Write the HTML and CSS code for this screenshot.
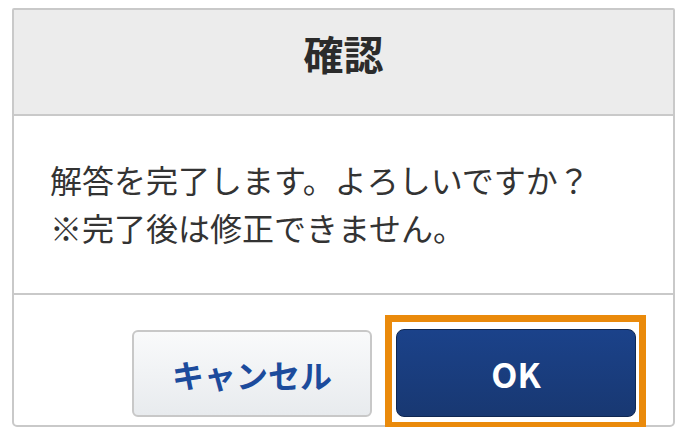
FILE: index.html
```html
<!DOCTYPE html>
<html lang="ja">
<head>
<meta charset="utf-8">
<title>確認</title>
<link rel="stylesheet" href="styles.css">
</head>
<body>
<div class="dialog">
  <div class="dialog-header">確認</div>
  <div class="dialog-body">
    <p>解答を完了します。よろしいですか？</p>
    <p>※完了後は修正できません。</p>
  </div>
  <div class="dialog-footer">
    <button class="btn btn-cancel" type="button">キャンセル</button>
    <span class="focus-wrap"><button class="btn btn-ok" type="button">OK</button></span>
  </div>
</div>
</body>
</html>
```

FILE: styles.css
```css
html, body {
  margin: 0;
  padding: 0;
  background: #ffffff;
}

body {
  font-family: "Noto Sans CJK JP", "Noto Sans", sans-serif;
  color: #333333;
  padding: 8px 0 0 12px;
}

.dialog {
  width: 663px;
  box-sizing: border-box;
  border: 2px solid #c9c9c9;
  border-radius: 2px 2px 5px 5px;
  background: #ffffff;
}

.dialog-header {
  box-sizing: border-box;
  height: 106px;
  padding-top: 23px;
  background: #ececec;
  border-bottom: 2px solid #c9c9c9;
  text-align: center;
  font-size: 40px;
  line-height: 40px;
  font-weight: 700;
  color: #2b2b2b;
}

.dialog-body {
  box-sizing: border-box;
  height: 179px;
  padding: 39px 0 0 36px;
  border-bottom: 2px solid #c9c9c9;
}

.dialog-body p {
  margin: 0;
  font-size: 32px;
  line-height: 48px;
  color: #333333;
}

.dialog-footer {
  display: flex;
  justify-content: flex-end;
  gap: 24px;
  padding: 34px 37px 0 0;
  height: 130px;
  box-sizing: border-box;
}

.btn {
  width: 240px;
  height: 88px;
  box-sizing: border-box;
  font-family: "Noto Sans CJK JP", "Noto Sans", sans-serif;
  font-weight: 700;
  font-size: 32px;
  padding: 0;
  margin: 0;
  cursor: pointer;
}

.btn-cancel {
  margin-top: 1px;
  height: 87px;
  background: linear-gradient(#f9fafb, #e8ebee);
  border: 2px solid #c8c8c8;
  border-radius: 6px;
  color: #1c4b9c;
}

.focus-wrap {
  position: relative;
  display: block;
  height: 88px;
}

.focus-wrap::after {
  content: "";
  position: absolute;
  left: -11px;
  top: -14px;
  right: -10px;
  bottom: -12px;
  border: 7px solid #ea8a0b;
  pointer-events: none;
}

.btn-ok {
  display: block;
  background: linear-gradient(#1b428a, #183872);
  border: 1px solid #0f2752;
  border-radius: 8px;
  color: #ffffff;
  font-size: 34px;
}
```
